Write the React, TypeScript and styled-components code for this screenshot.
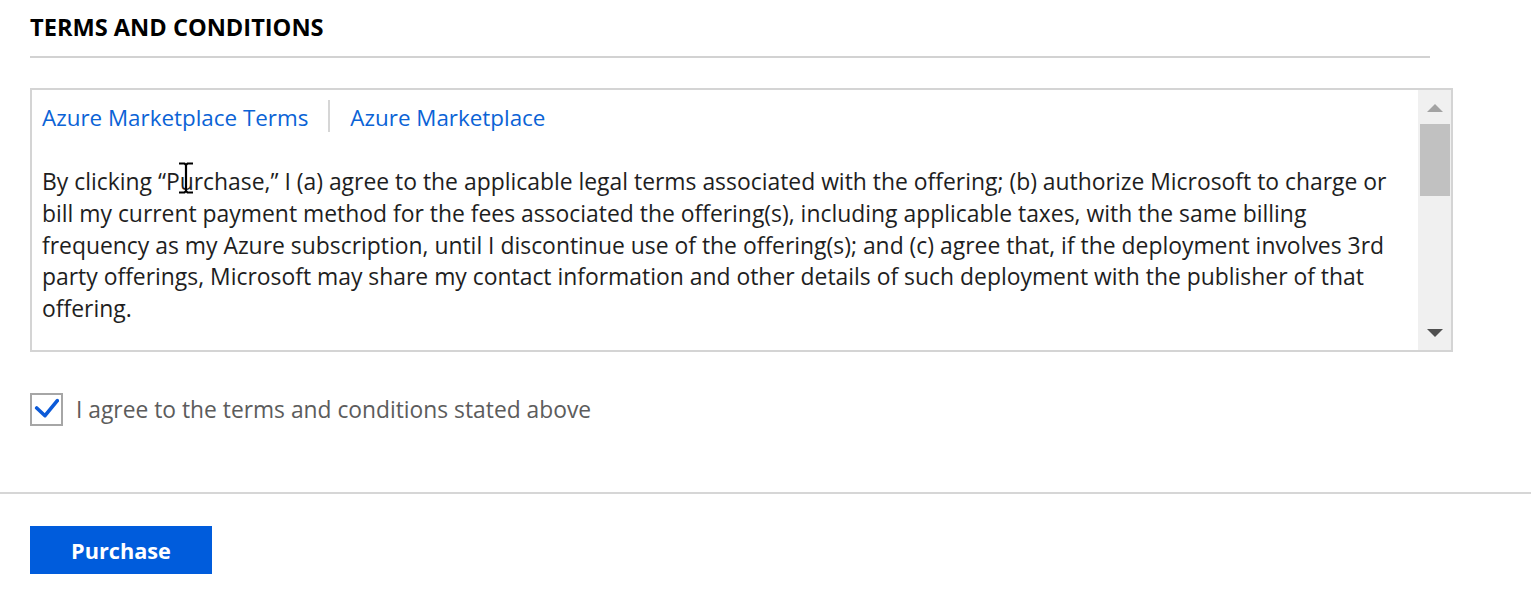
import React from "react";
import styled, { createGlobalStyle } from "styled-components";

const Global = createGlobalStyle`
  html, body { margin: 0; padding: 0; background: #ffffff; }
  body { font-family: "Open Sans", "Noto Sans", Arial, sans-serif; color: #1e1e1e; }
`;

const Page = styled.div`
  width: 1531px;
  height: 593px;
  overflow: hidden;
  display: flex;
  flex-direction: column;
`;

const Section = styled.section`
  padding: 0 30px;
  display: flex;
  flex-direction: column;
`;

const Heading = styled.h2`
  margin: 0;
  width: 1400px;
  box-sizing: border-box;
  height: 58px;
  padding-top: 11px;
  font-size: 23.6px;
  line-height: 32px;
  font-weight: 700;
  color: #000;
  border-bottom: 2px solid #d2d2d2;
`;

const TermsBox = styled.div`
  margin-top: 30px;
  width: 1423px;
  height: 264px;
  box-sizing: border-box;
  border: 2px solid #d4d4d4;
  display: flex;
`;

const Content = styled.div`
  flex: 1;
  padding: 10px 0 0 10px;
  overflow: hidden;
`;

const LinkRow = styled.div`
  display: flex;
  align-items: center;
  height: 32px;
`;

const Link = styled.a`
  color: #0b63d6;
  font-size: 22.4px;
  line-height: 32px;
  padding-top: 3px;
  text-decoration: none;
  cursor: pointer;
`;

const Sep = styled.span`
  width: 2px;
  height: 32px;
  background: #d6d6d6;
  margin: 0 20px;
`;

const Paragraph = styled.p`
  margin: 34px 0 0 0;
  font-size: 22.9px;
  line-height: 31.75px;
  color: #1e1e1e;
  position: relative;
`;

const Line = styled.span`
  display: block;
  white-space: nowrap;
`;

const IBeam = styled.svg`
  position: absolute;
  left: 135px;
  top: -4px;
  pointer-events: none;
`;

const Scrollbar = styled.div`
  width: 33px;
  background: #f0f0f0;
  display: flex;
  flex-direction: column;
  align-items: center;
`;

const Arrow = styled.div<{ $dir: "up" | "down"; $color: string }>`
  width: 0;
  height: 0;
  border-left: 8px solid transparent;
  border-right: 8px solid transparent;
  ${(p) =>
    p.$dir === "up"
      ? `border-bottom: 8px solid ${p.$color}; margin-top: 14px;`
      : `border-top: 8px solid ${p.$color}; margin-top: auto; margin-bottom: 13px;`}
`;

const Thumb = styled.div`
  width: 30px;
  height: 72px;
  margin-top: 12px;
  margin-left: 1px;
  background: #c1c1c1;
`;

const AgreeRow = styled.label`
  margin-top: 41px;
  display: flex;
  align-items: center;
  gap: 13px;
  cursor: pointer;
`;

const Box = styled.span`
  width: 33px;
  height: 33px;
  box-sizing: border-box;
  border: 2px solid #a6a6a6;
  display: flex;
  align-items: center;
  justify-content: center;
  background: #fff;
`;

const AgreeText = styled.span`
  font-size: 22.8px;
  color: #5c5c5c;
`;

const Divider = styled.hr`
  margin: 66px 0 0 0;
  border: none;
  height: 2px;
  background: #d6d6d6;
  width: 100%;
`;

const Footer = styled.div`
  padding: 32px 30px 0 30px;
`;

const PurchaseButton = styled.button`
  width: 182px;
  height: 48px;
  border: none;
  background: #005cdc;
  color: #fff;
  font-family: "Open Sans", "Noto Sans", Arial, sans-serif;
  font-size: 21.7px;
  font-weight: 700;
  cursor: pointer;
  padding: 0;
`;

const lines = [
  "By clicking \u201cPurchase,\u201d I (a) agree to the applicable legal terms associated with the offering; (b) authorize Microsoft to charge or",
  "bill my current payment method for the fees associated the offering(s), including applicable taxes, with the same billing",
  "frequency as my Azure subscription, until I discontinue use of the offering(s); and (c) agree that, if the deployment involves 3rd",
  "party offerings, Microsoft may share my contact information and other details of such deployment with the publisher of that",
  "offering.",
];

export default function App() {
  return (
    <Page>
      <Global />
      <Section>
        <Heading>TERMS AND CONDITIONS</Heading>
        <TermsBox>
          <Content>
            <LinkRow>
              <Link>Azure Marketplace Terms</Link>
              <Sep />
              <Link>Azure Marketplace</Link>
            </LinkRow>
            <Paragraph>
              {lines.map((l, i) => (
                <Line key={i}>{l}</Line>
              ))}
              <IBeam width="18" height="32" viewBox="0 0 18 32">
                <path d="M2 1.5h5.5l1.5 1.5 1.5-1.5H16M9 3v26M2 30.5h5.5L9 29l1.5 1.5H16" fill="none" stroke="#000" strokeWidth="2.2" />
              </IBeam>
            </Paragraph>
          </Content>
          <Scrollbar>
            <Arrow $dir="up" $color="#a3a3a3" />
            <Thumb />
            <Arrow $dir="down" $color="#505050" />
          </Scrollbar>
        </TermsBox>
        <AgreeRow>
          <Box>
            <svg width="25" height="25" viewBox="0 0 25 25">
              <path d="M4.7 15 L13 22.7 L25.3 7.7" fill="none" stroke="#0c5ad8" strokeWidth="3.6" strokeLinecap="round" strokeLinejoin="round" transform="translate(-2,-4)" />
            </svg>
          </Box>
          <AgreeText>I agree to the terms and conditions stated above</AgreeText>
        </AgreeRow>
      </Section>
      <Divider />
      <Footer>
        <PurchaseButton>Purchase</PurchaseButton>
      </Footer>
    </Page>
  );
}
